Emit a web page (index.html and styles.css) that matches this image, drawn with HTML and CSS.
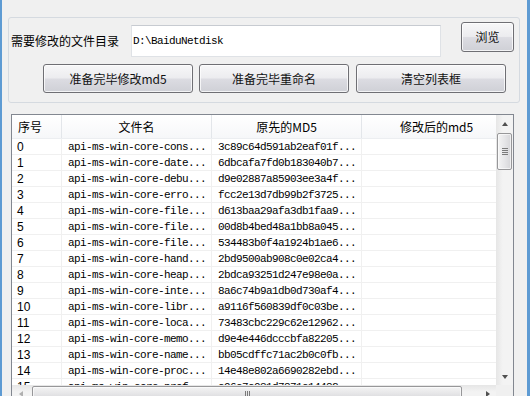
FILE: index.html
```html
<!DOCTYPE html>
<html>
<head>
<meta charset="utf-8">
<link rel="stylesheet" href="styles.css">
</head>
<body>
<div class="window">
  <div class="group">
    <div class="row1">
      <span class="label">需要修改的文件目录</span>
      <div class="textbox">D:\BaiduNetdisk</div>
      <button class="btn browse">浏览</button>
    </div>
    <div class="row2">
      <button class="btn wide">准备完毕修改md5</button>
      <button class="btn wide mid">准备完毕重命名</button>
      <button class="btn wide last">清空列表框</button>
    </div>
  </div>
  <div class="list">
    <div class="viewport">
      <div class="header">
        <div class="hcell left">序号</div>
        <div class="hcell">文件名</div>
        <div class="hcell">原先的MD5</div>
        <div class="hcell">修改后的md5</div>
      </div>
      <div class="rows">
        <div class="row"><div class="cell">0</div><div class="cell">api-ms-win-core-cons...</div><div class="cell">3c89c64d591ab2eaf01f...</div><div class="cell"></div></div>
        <div class="row"><div class="cell">1</div><div class="cell">api-ms-win-core-date...</div><div class="cell">6dbcafa7fd0b183040b7...</div><div class="cell"></div></div>
        <div class="row"><div class="cell">2</div><div class="cell">api-ms-win-core-debu...</div><div class="cell">d9e02887a85903ee3a4f...</div><div class="cell"></div></div>
        <div class="row"><div class="cell">3</div><div class="cell">api-ms-win-core-erro...</div><div class="cell">fcc2e13d7db99b2f3725...</div><div class="cell"></div></div>
        <div class="row"><div class="cell">4</div><div class="cell">api-ms-win-core-file...</div><div class="cell">d613baa29afa3db1faa9...</div><div class="cell"></div></div>
        <div class="row"><div class="cell">5</div><div class="cell">api-ms-win-core-file...</div><div class="cell">00d8b4bed48a1bb8a045...</div><div class="cell"></div></div>
        <div class="row"><div class="cell">6</div><div class="cell">api-ms-win-core-file...</div><div class="cell">534483b0f4a1924b1ae6...</div><div class="cell"></div></div>
        <div class="row"><div class="cell">7</div><div class="cell">api-ms-win-core-hand...</div><div class="cell">2bd9500ab908c0e02ca4...</div><div class="cell"></div></div>
        <div class="row"><div class="cell">8</div><div class="cell">api-ms-win-core-heap...</div><div class="cell">2bdca93251d247e98e0a...</div><div class="cell"></div></div>
        <div class="row"><div class="cell">9</div><div class="cell">api-ms-win-core-inte...</div><div class="cell">8a6c74b9a1db0d730af4...</div><div class="cell"></div></div>
        <div class="row"><div class="cell">10</div><div class="cell">api-ms-win-core-libr...</div><div class="cell">a9116f560839df0c03be...</div><div class="cell"></div></div>
        <div class="row"><div class="cell">11</div><div class="cell">api-ms-win-core-loca...</div><div class="cell">73483cbc229c62e12962...</div><div class="cell"></div></div>
        <div class="row"><div class="cell">12</div><div class="cell">api-ms-win-core-memo...</div><div class="cell">d9e4e446dcccbfa82205...</div><div class="cell"></div></div>
        <div class="row"><div class="cell">13</div><div class="cell">api-ms-win-core-name...</div><div class="cell">bb05cdffc71ac2b0c0fb...</div><div class="cell"></div></div>
        <div class="row"><div class="cell">14</div><div class="cell">api-ms-win-core-proc...</div><div class="cell">14e48e802a6690282ebd...</div><div class="cell"></div></div>
        <div class="row"><div class="cell">15</div><div class="cell">api-ms-win-core-prof...</div><div class="cell">c96c7c031d7871c14482...</div><div class="cell"></div></div>
      </div>
    </div>
    <div class="vscroll">
      <div class="arrow up"></div>
      <div class="vthumb"><span></span><span></span><span></span><span></span></div>
      <div class="vspace"></div>
      <div class="arrow down"></div>
    </div>
    <div class="hscroll">
      <div class="arrow lt"></div>
      <div class="hthumb"><span></span><span></span><span></span></div>
      <div class="hspace"></div>
      <div class="arrow rt"></div>
    </div>
    <div class="corner"></div>
  </div>
</div>
</body>
</html>
```
FILE: styles.css
```css
html, body {
  margin: 0;
  padding: 0;
}
body {
  width: 530px;
  height: 418px;
  background: #ffffff;
  overflow: hidden;
  font-family: "Noto Sans CJK SC", "Liberation Sans", sans-serif;
  font-size: 12px;
  font-weight: normal;
  color: #000;
}
.window {
  height: 396px;
  box-sizing: border-box;
  border-left: 2px solid #5e9bd3;
  border-right: 3px solid #5e9bd3;
  background: #f0f0f0;
  overflow: hidden;
  padding-top: 17px;
}
.group {
  margin-left: 6px;
  width: 512px;
  height: 86px;
  box-sizing: border-box;
  border: 1px solid #d5dae0;
  border-radius: 3px;
  padding-top: 4px;
}
.row1 {
  display: flex;
  align-items: flex-start;
  height: 35px;
}
.label {
  display: block;
  width: 120px;
  padding-left: 2px;
  margin-top: 12px;
  line-height: 14px;
  white-space: nowrap;
}
.textbox {
  width: 310px;
  height: 32px;
  box-sizing: border-box;
  margin-top: 3px;
  background: #fff;
  border: 1px solid #dfe2e6;
  border-top-color: #c7cbd1;
  padding-left: 1px;
  font-family: "Liberation Mono", monospace;
  font-size: 11px;
  letter-spacing: -0.6px;
  line-height: 30px;
}
.btn {
  display: block;
  box-sizing: border-box;
  margin: 0;
  padding: 0;
  border: 1px solid #6f6f74;
  border-radius: 3px;
  background: linear-gradient(#f7f7f8 0%, #ececef 48%, #dcdce2 52%, #cfd0d6 100%);
  box-shadow: inset 0 0 0 1px rgba(255,255,255,0.75);
  font-family: "Noto Sans CJK SC", "Liberation Sans", sans-serif;
  font-size: 12px;
  font-weight: 400;
  color: #111;
  line-height: 14px;
}
.browse {
  margin-left: 20px;
  width: 53px;
  height: 30px;
}
.row2 {
  display: flex;
  margin-top: 7px;
  padding-left: 34px;
}
.wide {
  width: 150px;
  height: 29px;
}
.mid {
  margin-left: 6px;
}
.last {
  margin-left: 7px;
}
.list {
  margin-top: 11px;
  margin-left: 9px;
  width: 503px;
  height: 289px;
  box-sizing: border-box;
  border: 1px solid #828790;
  background: #fff;
  display: grid;
  grid-template-columns: 484px 17px;
  grid-template-rows: 270px 17px;
}
.viewport {
  overflow: hidden;
  position: relative;
}
.header {
  display: grid;
  grid-template-columns: 50px 150px 150px 150px;
  width: 500px;
  height: 24px;
  background: linear-gradient(#ffffff, #f6f7f9);
  border-bottom: 1px solid #eceef1;
  box-sizing: border-box;
}
.hcell {
  border-right: 1px solid #e3e6ea;
  text-align: center;
  line-height: 23px;
  white-space: nowrap;
}
.hcell.left {
  text-align: left;
  padding-left: 6px;
}
.rows {
  width: 500px;
}
.row {
  display: grid;
  grid-template-columns: 50px 150px 150px 150px;
  height: 16px;
  box-sizing: border-box;
  border-bottom: 1px solid #f0f0f0;
}
.cell {
  border-right: 1px solid #f0f0f0;
  padding-left: 6px;
  font-family: "Liberation Mono", monospace;
  font-size: 11px;
  letter-spacing: -0.6px;
  line-height: 16px;
  white-space: nowrap;
  overflow: hidden;
}
.row .cell:first-child {
  padding-left: 5px;
  font-family: "Liberation Sans", sans-serif;
  font-size: 12px;
  letter-spacing: 0;
}
.vscroll {
  background: linear-gradient(90deg, #e6e6e6, #f3f3f3 40%, #f3f3f3);
  display: flex;
  flex-direction: column;
  align-items: center;
}
.hscroll {
  background: linear-gradient(#e6e6e6, #f3f3f3 40%, #f3f3f3);
  display: flex;
  align-items: center;
}
.corner {
  background: #f0f0f0;
}
.arrow {
  flex: none;
  width: 17px;
  height: 17px;
  display: flex;
  align-items: center;
  justify-content: center;
}
.arrow::before {
  content: "";
  width: 0;
  height: 0;
}
.up::before {
  border-left: 3.5px solid transparent;
  border-right: 3.5px solid transparent;
  border-bottom: 4px solid #505050;
}
.down::before {
  border-left: 3.5px solid transparent;
  border-right: 3.5px solid transparent;
  border-top: 4px solid #505050;
}
.lt::before {
  border-top: 3.5px solid transparent;
  border-bottom: 3.5px solid transparent;
  border-right: 4px solid #b0b0b0;
}
.rt::before {
  border-top: 3.5px solid transparent;
  border-bottom: 3.5px solid transparent;
  border-left: 4px solid #505050;
}
.vthumb {
  margin-top: 1px;
  width: 15px;
  height: 37px;
  box-sizing: border-box;
  border: 1px solid #979799;
  border-radius: 2px;
  background: linear-gradient(90deg, #f4f4f4, #e6e6e8 50%, #d6d6d9);
  box-shadow: inset 0 0 0 1px rgba(255,255,255,0.6);
  display: flex;
  flex-direction: column;
  align-items: center;
  justify-content: center;
  gap: 1px;
}
.vthumb span {
  width: 6px;
  height: 1px;
  background: #7a7a7a;
}
.vspace {
  flex: 1;
}
.hthumb {
  margin-left: 3px;
  width: 430px;
  height: 15px;
  box-sizing: border-box;
  border: 1px solid #979799;
  border-radius: 2px;
  background: linear-gradient(#f4f4f4, #e6e6e8 50%, #d6d6d9);
  box-shadow: inset 0 0 0 1px rgba(255,255,255,0.6);
  display: flex;
  align-items: center;
  justify-content: center;
  gap: 1px;
}
.hthumb span {
  width: 1px;
  height: 6px;
  background: #7a7a7a;
}
.hspace {
  flex: 1;
}
```
